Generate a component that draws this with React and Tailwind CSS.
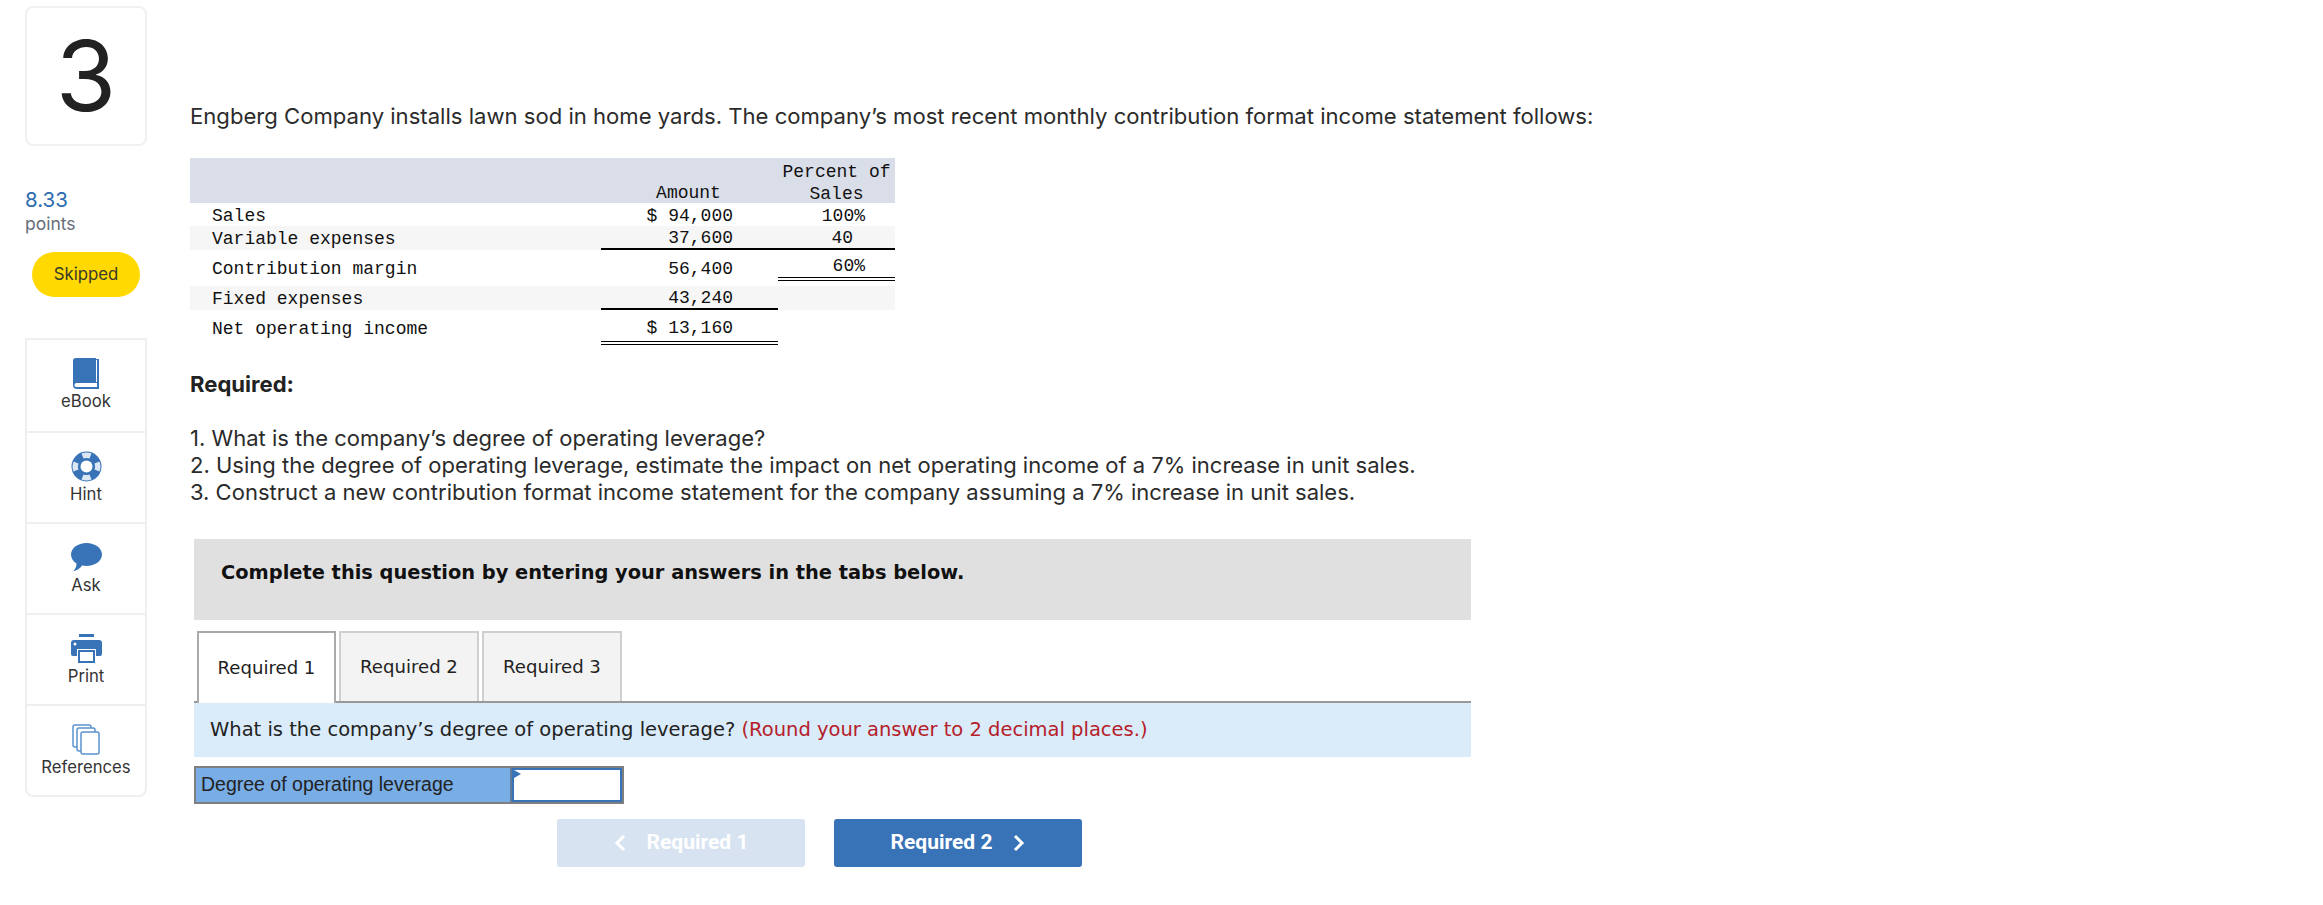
import React from 'react';

const rows = [
  { label: 'Sales', amount: '$ 94,000', pct: '100%', h: 'h-[23px]', pctPad: 'pr-[30px]' },
  { label: 'Variable expenses', amount: '37,600', pct: '40', h: 'h-[24px]', striped: true, amountLine: 'border-b-2 border-black', pctLine: 'border-b-2 border-black', pctPad: 'pr-[42px]' },
  { label: 'Contribution margin', amount: '56,400', pct: '60%', h: 'h-[36px]', pctLine: 'h-[31px] pt-[5px] border-b-[4px] border-double border-black', pctPad: 'pr-[30px]', pctAlign: 'items-start' },
  { label: 'Fixed expenses', amount: '43,240', pct: '', h: 'h-[24px]', striped: true, amountLine: 'border-b-2 border-black' },
  { label: 'Net operating income', amount: '$ 13,160', pct: '', h: 'h-[36px]', amountLine: 'h-[35px] pt-[7px] border-b-[4px] border-double border-black', amountAlign: 'items-start' },
];

const BookIcon = () => (
  <svg width="28" height="31" viewBox="0 0 28 31">
    <path d="M4 0h20v1h3v30H5a4 4 0 0 1-4-4V3a3 3 0 0 1 3-3z" fill="#3873b7" />
    <path d="M4 25h21v4H5a2 2 0 0 1-1-4z" fill="#fff" />
    <path d="M24.500 2v22" stroke="#fff" strokeWidth="1" />
  </svg>
);

const HintIcon = () => (
  <svg width="31" height="31" viewBox="0 0 31 31">
    <circle cx="15.500" cy="15.500" r="15" fill="#3873b7" />
    <circle cx="15.500" cy="15.500" r="6" fill="#fff" />
    <path d="M10.500 2.500a14 14 0 0 1 10 0l-2 5a8 8 0 0 0-6 0zM10.500 28.500a14 14 0 0 0 10 0l-2-5a8 8 0 0 1-6 0zM2.500 10.500a14 14 0 0 0 0 10l5-2a8 8 0 0 1 0-6zM28.500 10.500a14 14 0 0 1 0 10l-5-2a8 8 0 0 0 0-6z" fill="#dbe7f4" />
  </svg>
);

const AskIcon = () => (
  <svg width="31" height="29" viewBox="0 0 31 29">
    <path d="M15.500 0C24 0 31 5 31 11.500S24 23 15.500 23c-1.500 0-3-.2-4.400-.5C9 25.500 5 28 2.500 28c2-2 3-5 3-7.500C2 18.500 0 15 0 11.500 0 5 7 0 15.500 0z" fill="#3873b7" />
  </svg>
);

const PrintIcon = () => (
  <svg width="31" height="29" viewBox="0 0 31 29">
    <rect x="8" y="0" width="15" height="3" fill="#3873b7" />
    <path d="M3 6h25a3 3 0 0 1 3 3v11a2 2 0 0 1-2 2h-4v-7H6v7H2a2 2 0 0 1-2-2V9a3 3 0 0 1 3-3z" fill="#3873b7" />
    <circle cx="4" cy="10" r="1.500" fill="#fff" />
    <rect x="8" y="17" width="15" height="11" fill="#fff" stroke="#3873b7" strokeWidth="2" />
  </svg>
);

const RefIcon = () => (
  <svg width="28" height="31" viewBox="0 0 28 31" fill="#fff" stroke="#5b93d0" strokeWidth="1.500">
    <rect x="1" y="1" width="18" height="22" rx="2" />
    <rect x="5" y="4" width="18" height="23" rx="2" />
    <rect x="9" y="8" width="18" height="22" rx="2" />
  </svg>
);

const tools = [
  { label: 'eBook', icon: <BookIcon /> },
  { label: 'Hint', icon: <HintIcon /> },
  { label: 'Ask', icon: <AskIcon /> },
  { label: 'Print', icon: <PrintIcon /> },
  { label: 'References', icon: <RefIcon /> },
];

const sideFont = "font-['Inter','Noto_Sans',sans-serif]";

const Sidebar = () => (
  <div className={`w-[122px] shrink-0 ml-[25px] pt-[6px] ${sideFont}`}>
    <div className="h-[140px] border-2 border-[#f1f1f1] rounded-lg flex items-center justify-center text-[#222] text-[98px] font-normal leading-none">
      3
    </div>
    <div className="mt-[42px] text-[20.500px] leading-[24px] text-[#2c6cb0]">8.33</div>
    <div className="mt-[1px] text-[17.500px] leading-[22px] text-[#666e7a]">points</div>
    <div className="mt-[17px] ml-[7px] w-[108px] h-[45px] rounded-full bg-[#ffd900] flex items-center justify-center text-[16.800px] text-[#3a3a2a]">
      Skipped
    </div>
    <div className="mt-[41px] border-2 border-[#efefef] rounded-b-lg">
      {tools.map((t, i) => (
        <div key={t.label} className={`h-[91px] flex flex-col items-center pt-[18px] ${i > 0 ? 'border-t-2 border-[#efefef]' : ''}`}>
          <div className="h-[31px] flex items-center">{t.icon}</div>
          <div className="mt-[2px] text-[16.700px] leading-[20px] text-[#333]">{t.label}</div>
        </div>
      ))}
    </div>
  </div>
);

const IncomeTable = () => (
  <div className="mt-[28px] w-[705px] font-['Liberation_Mono',monospace] text-[18px] leading-[23px] text-[#111]">
    <div className="h-[45px] bg-[#d9dee8] flex items-end">
      <div className="w-[411px]" />
      <div className="w-[177px] text-center pr-[2px] leading-[23px] translate-y-[2px]">Amount</div>
      <div className="w-[117px] text-center leading-[22px] translate-y-[2px]">Percent of<br />Sales</div>
    </div>
    {rows.map((r) => (
      <div key={r.label} className={`flex ${r.h} ${r.striped ? 'bg-[#f6f6f6]' : ''}`}>
        <div className="w-[411px] pl-[22px] pt-[3px] flex items-center">{r.label}</div>
        <div className={`w-[177px] flex justify-end pr-[45px] ${r.amountAlign || 'items-center pt-[3px]'} ${r.amountLine || ''}`}>{r.amount}</div>
        <div className={`w-[117px] flex justify-end ${r.pctPad || ''} ${r.pctAlign || 'items-center pt-[3px]'} ${r.pctLine || ''}`}>{r.pct}</div>
      </div>
    ))}
  </div>
);

const tabs = ['Required 1', 'Required 2', 'Required 3'];

const Tabs = () => (
  <div className="mt-[11px] ml-[4px] w-[1277px] border-b-2 border-[#999] h-[72px] flex items-end pl-[3px] gap-[3px] font-['DejaVu_Sans',sans-serif] text-[18.100px] text-[#222]">
    {tabs.map((t, i) => (
      <div
        key={t}
        className={i === 0
          ? 'w-[139px] h-[72px] -mb-[2px] bg-white border-2 border-b-0 border-[#aaa] flex items-center justify-center'
          : 'w-[140px] h-[70px] bg-[#f3f3f3] border-2 border-b-0 border-[#cfcfcf] flex items-center justify-center'}
      >
        {t}
      </div>
    ))}
  </div>
);

export default function App() {
  return (
    <div className="w-[2323px] h-[905px] bg-white flex overflow-hidden">
      <Sidebar />
      <div className="ml-[43px] flex-1">
        <p className={`mt-[102px] text-[22.100px] leading-[28px] text-[#2b2b2b] ${sideFont}`}>
          Engberg Company installs lawn sod in home yards. The company’s most recent monthly contribution format income statement follows:
        </p>
        <IncomeTable />
        <p className={`mt-[24px] text-[22.100px] leading-[28px] font-bold text-[#222] ${sideFont}`}>Required:</p>
        <div className={`mt-[27px] text-[22px] leading-[27px] text-[#2b2b2b] ${sideFont}`}>
          <p>1. What is the company’s degree of operating leverage?</p>
          <p>2. Using the degree of operating leverage, estimate the impact on net operating income of a 7% increase in unit sales.</p>
          <p>3. Construct a new contribution format income statement for the company assuming a 7% increase in unit sales.</p>
        </div>
        <div className="mt-[33px] ml-[4px] w-[1277px] h-[81px] bg-[#e0e0e0] flex items-center pl-[27px] pb-[13px] font-['DejaVu_Sans',sans-serif] font-bold text-[19.400px] text-[#111]">
          Complete this question by entering your answers in the tabs below.
        </div>
        <Tabs />
        <div className="ml-[4px] w-[1277px] h-[54px] bg-[#daecfa] flex items-center pl-[16px] font-['DejaVu_Sans',sans-serif] text-[19.500px] text-[#222]">
          <span>What is the company’s degree of operating leverage? <span className="text-[#b5202a]">(Round your answer to 2 decimal places.)</span></span>
        </div>
        <div className="mt-[9px] ml-[4px] w-[430px] h-[38px] flex border-2 border-[#7f7f7f] font-['Liberation_Sans',sans-serif] text-[19.500px] text-[#222]">
          <div className="w-[316px] bg-[#78ade6] flex items-center pl-[5px] border-r-2 border-[#5f7a9a]">Degree of operating leverage</div>
          <div className="relative flex-1 bg-white border-2 border-[#3873b7]">
            <span className="absolute left-0 top-0 w-0 h-0 border-y-[4px] border-y-transparent border-l-[7px] border-l-[#3873b7]" />
          </div>
        </div>
        <div className="mt-[15px] ml-[367px] flex gap-[29px] font-['Roboto',sans-serif] font-bold text-[21px] text-white">
          <div className="w-[248px] h-[48px] rounded-[3px] bg-[#d7e3f1] flex items-center justify-center gap-[21px]">
            <svg width="12" height="18" viewBox="0 0 12 18" fill="none" stroke="#fff" strokeWidth="3"><path d="M10 2L3 9l7 7" /></svg>
            <span>Required 1</span>
          </div>
          <div className="w-[248px] h-[48px] rounded-[3px] bg-[#3873b7] flex items-center justify-center gap-[21px]">
            <span>Required 2</span>
            <svg width="12" height="18" viewBox="0 0 12 18" fill="none" stroke="#fff" strokeWidth="3"><path d="M2 2l7 7-7 7" /></svg>
          </div>
        </div>
      </div>
    </div>
  );
}
